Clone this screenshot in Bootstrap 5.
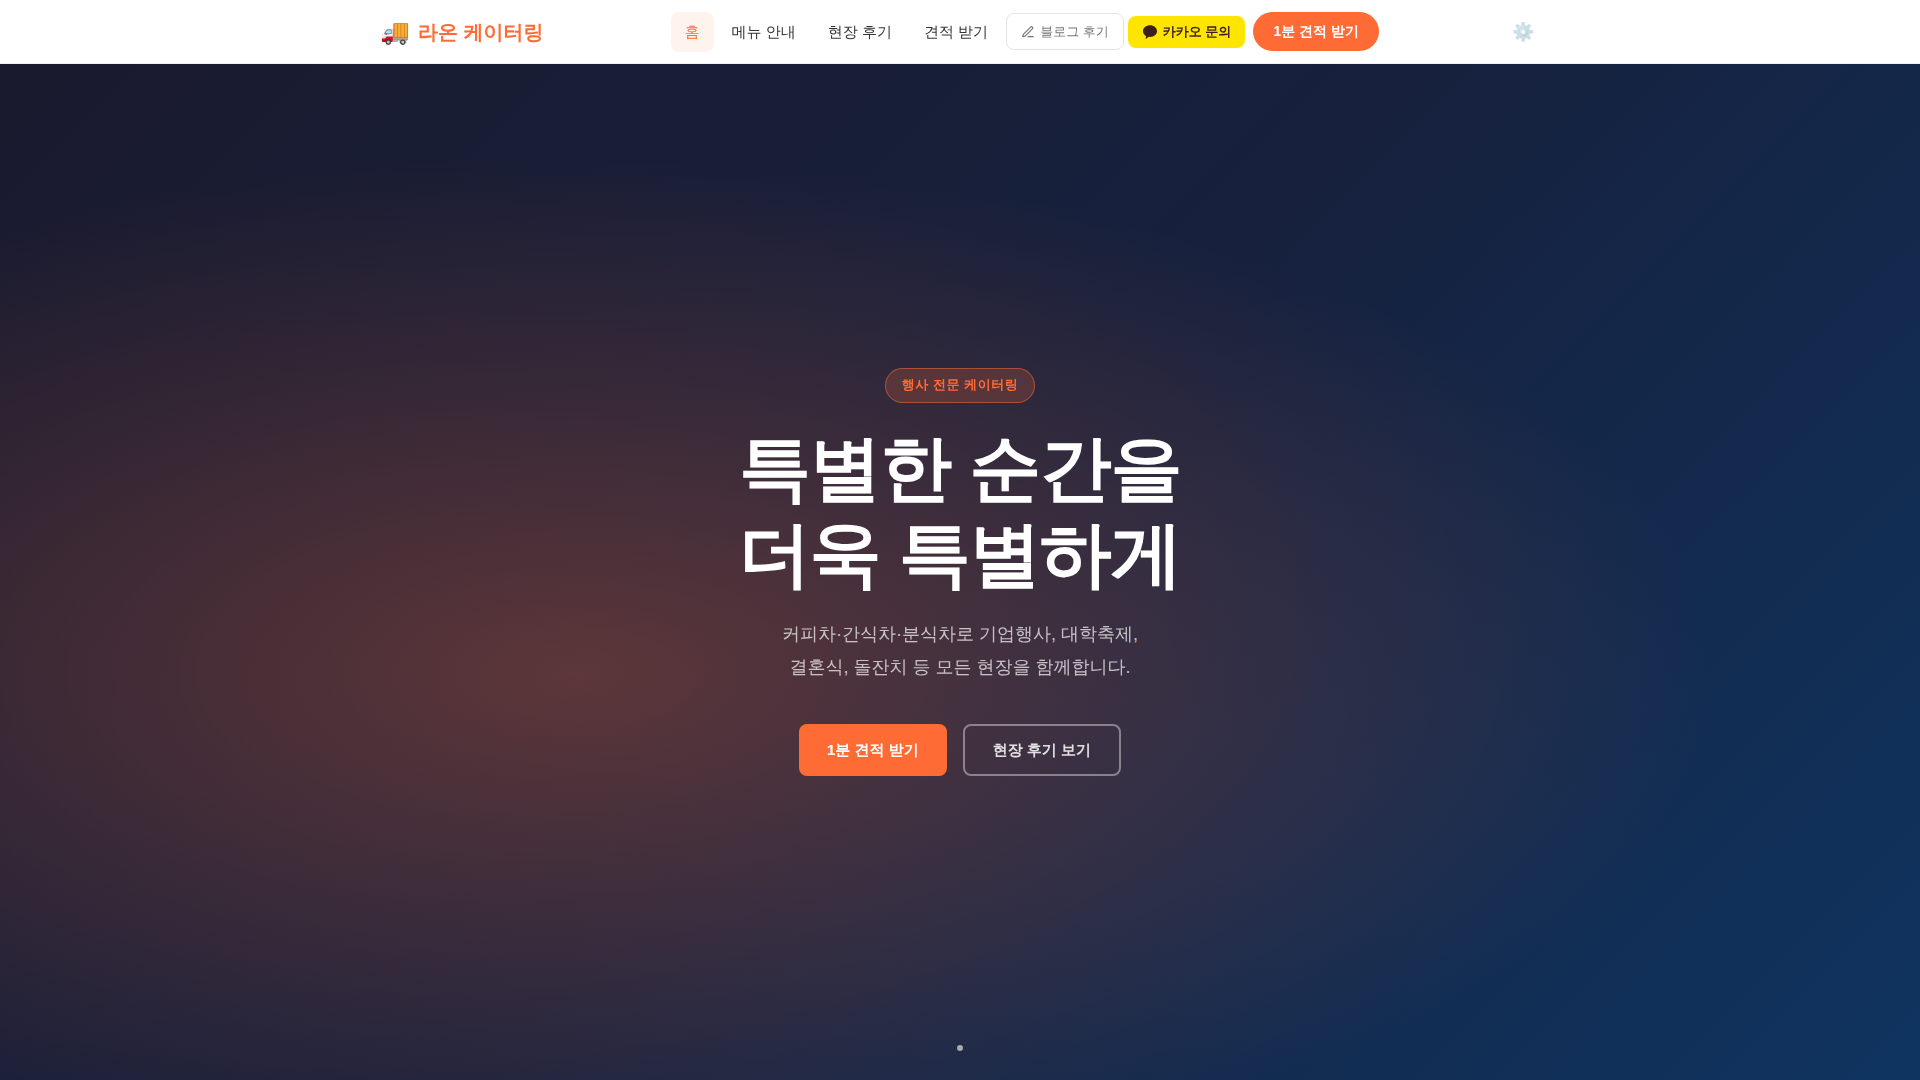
<!DOCTYPE html>
<html lang="ko">
<head>
<meta charset="utf-8">
<meta name="viewport" content="width=device-width, initial-scale=1">
<title>라온 케이터링</title>
<link href="https://cdn.jsdelivr.net/npm/bootstrap@5.3.0/dist/css/bootstrap.min.css" rel="stylesheet">
<style>
  :root { --brand: #ff6b35; }
  body { font-family: "Liberation Sans", "WenQuanYi Zen Hei", "Noto Sans CJK KR", sans-serif; color: #333; }
  .fw-heavy { font-weight: 800; }
  .site-header { background: #fff; height: 64px; border-bottom: 1px solid #eee; }
  .site-wrap { max-width: 1200px; padding: 0 20px; }
  .site-logo { color: var(--brand); font-size: 20px; line-height: 24px; gap: 8px; }
  .site-logo .truck { font-size: 24px; line-height: 30px; }
  .site-nav { gap: 4px; }
  .site-nav .page-link-item { color: #333; font-size: 15px; line-height: 24px; padding: 8px 14px; border-radius: 8px; }
  .site-nav .page-link-item.active { color: var(--brand); background: #fff3ee; }
  .btn-blog { --bs-btn-color: #777; --bs-btn-border-color: #e5e5e5; --bs-btn-bg: #fff; font-size: 13px; line-height: 21px; padding: 7px 14px; border-radius: 8px; gap: 5px; }
  .btn-kakao { --bs-btn-color: #3c1e1e; --bs-btn-bg: #fee500; --bs-btn-border-width: 0; font-size: 13px; line-height: 16px; padding: 8px 14px; border-radius: 8px; gap: 5px; }
  .btn-quote { --bs-btn-color: #fff; --bs-btn-bg: var(--brand); --bs-btn-border-width: 0; font-size: 14px; line-height: 23px; padding: 8px 20px; }
  .btn-gear { font-size: 18px; line-height: 24px; padding: 4px 6px; opacity: .4; border: 0; }
  .hero-area { min-height: calc(100vh - 64px);
    background: radial-gradient(ellipse at 30% 60%, rgba(255,107,53,.3) 0%, transparent 60%), linear-gradient(135deg, #1a1a2e 0%, #16213e 50%, #0f3460 100%); }
  .hero-tag { color: var(--brand); background: rgba(255,107,53,.2); border: 1px solid rgba(255,107,53,.5); font-size: 13px; line-height: 20px; letter-spacing: .04em; padding: 6px 16px 7px; margin-bottom: 22px; }
  .hero-title { color: #fff; font-size: 72px; line-height: 86px; letter-spacing: -.02em; margin-bottom: 21px; }
  .hero-text { color: rgba(255,255,255,.7); font-size: 18px; line-height: 33px; margin-bottom: 40px; }
  .hero-actions { gap: 16px; }
  .hero-btn { font-size: 15px; line-height: 24px; padding: 12px 28px; border-radius: 8px; border-width: 2px; }
  .hero-btn-main { --bs-btn-color: #fff; --bs-btn-bg: var(--brand); border-width: 0; padding: 14px 28px; }
  .hero-btn-line { --bs-btn-color: rgba(255,255,255,.85); --bs-btn-border-color: rgba(255,255,255,.4); }
  .scroll-dot { width: 6px; height: 6px; background: rgba(255,255,255,.6); bottom: 29px; }
</style>
</head>
<body>
<header class="site-header">
  <div class="site-wrap container-fluid h-100 d-flex align-items-center justify-content-between">
    <a href="#" class="site-logo d-flex align-items-center fw-heavy text-decoration-none"><span class="truck">🚚</span>라온 케이터링</a>
    <nav class="site-nav d-flex align-items-center">
      <a href="#" class="page-link-item active text-decoration-none" aria-current="page">홈</a>
      <a href="#" class="page-link-item text-decoration-none">메뉴 안내</a>
      <a href="#" class="page-link-item text-decoration-none">현장 후기</a>
      <a href="#" class="page-link-item text-decoration-none">견적 받기</a>
      <a href="#" class="btn btn-blog d-flex align-items-center">
        <svg width="14" height="14" viewBox="0 0 24 24" fill="none" stroke="currentColor" stroke-width="2" stroke-linecap="round" stroke-linejoin="round" aria-hidden="true"><path d="M12 20h9"/><path d="M16.500 3.500a2.120 2.120 0 0 1 3 3L7 19l-4 1 1-4Z"/></svg>블로그 후기</a>
      <a href="#" class="btn btn-kakao d-flex align-items-center fw-heavy">
        <svg width="16" height="16" viewBox="0 0 24 24" fill="currentColor" aria-hidden="true"><path d="M12 2C6.200 2 1.500 5.900 1.500 10.800c0 3.100 1.900 5.800 4.800 7.400L5.300 21.800c-.1.400.3.700.7.500l4.500-3c.5.100 1 .1 1.500.1 5.800 0 10.500-3.800 10.500-8.600S17.800 2 12 2z"/></svg>카카오 문의</a>
      <a href="#" class="btn btn-quote rounded-pill fw-heavy ms-1">1분 견적 받기</a>
    </nav>
    <button type="button" class="btn btn-gear" aria-label="설정">⚙️</button>
  </div>
</header>
<main class="hero-area position-relative d-flex flex-column align-items-center justify-content-center text-center">
  <span class="hero-tag rounded-pill fw-heavy">행사 전문 케이터링</span>
  <h1 class="hero-title fw-heavy">특별한 순간을<br>더욱 특별하게</h1>
  <p class="hero-text">커피차·간식차·분식차로 기업행사, 대학축제,<br>결혼식, 돌잔치 등 모든 현장을 함께합니다.</p>
  <div class="hero-actions d-flex">
    <a href="#" class="btn hero-btn hero-btn-main fw-heavy">1분 견적 받기</a>
    <a href="#" class="btn hero-btn hero-btn-line fw-heavy">현장 후기 보기</a>
  </div>
  <span class="scroll-dot position-absolute rounded-circle"></span>
</main>
<script src="https://cdn.jsdelivr.net/npm/bootstrap@5.3.0/dist/js/bootstrap.bundle.min.js"></script>
</body>
</html>
